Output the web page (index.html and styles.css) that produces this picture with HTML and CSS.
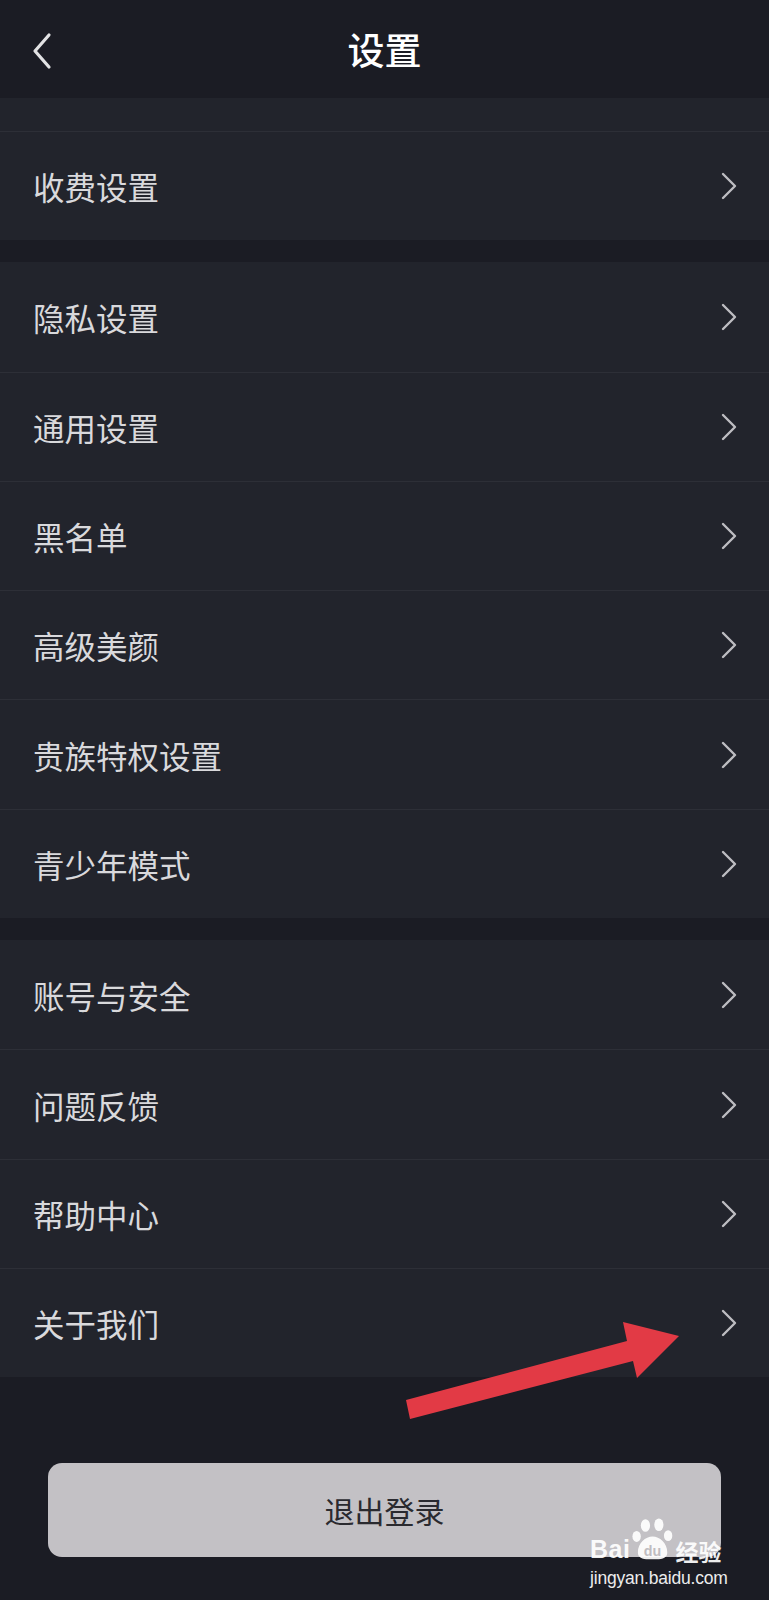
FILE: index.html
```html
<!DOCTYPE html>
<html lang="zh-CN">
<head>
<meta charset="utf-8">
<title>设置</title>
<link rel="stylesheet" href="styles.css">
</head>
<body>
<div class="page">
  <header class="topbar">
    <svg class="back" width="22" height="38" viewBox="0 0 22 38"><path d="M18 3 L4 19 L18 35" fill="none" stroke="#e2e2e4" stroke-width="3.2" stroke-linecap="round" stroke-linejoin="round"/></svg>
    <h1 class="title">设置</h1>
  </header>

  <section class="group">
    <div class="blank"></div>
    <div class="row bordered"><span>收费设置</span><svg class="chev" width="18" height="28" viewBox="0 0 18 28"><path d="M3 2 L15 14 L3 26" fill="none" stroke="#bdbdc1" stroke-width="2.4" stroke-linecap="round" stroke-linejoin="round"/></svg></div>
  </section>

  <section class="group">
    <div class="row"><span>隐私设置</span><svg class="chev" width="18" height="28" viewBox="0 0 18 28"><path d="M3 2 L15 14 L3 26" fill="none" stroke="#bdbdc1" stroke-width="2.4" stroke-linecap="round" stroke-linejoin="round"/></svg></div>
    <div class="row bordered"><span>通用设置</span><svg class="chev" width="18" height="28" viewBox="0 0 18 28"><path d="M3 2 L15 14 L3 26" fill="none" stroke="#bdbdc1" stroke-width="2.4" stroke-linecap="round" stroke-linejoin="round"/></svg></div>
    <div class="row bordered"><span>黑名单</span><svg class="chev" width="18" height="28" viewBox="0 0 18 28"><path d="M3 2 L15 14 L3 26" fill="none" stroke="#bdbdc1" stroke-width="2.4" stroke-linecap="round" stroke-linejoin="round"/></svg></div>
    <div class="row bordered"><span>高级美颜</span><svg class="chev" width="18" height="28" viewBox="0 0 18 28"><path d="M3 2 L15 14 L3 26" fill="none" stroke="#bdbdc1" stroke-width="2.4" stroke-linecap="round" stroke-linejoin="round"/></svg></div>
    <div class="row bordered"><span>贵族特权设置</span><svg class="chev" width="18" height="28" viewBox="0 0 18 28"><path d="M3 2 L15 14 L3 26" fill="none" stroke="#bdbdc1" stroke-width="2.4" stroke-linecap="round" stroke-linejoin="round"/></svg></div>
    <div class="row bordered"><span>青少年模式</span><svg class="chev" width="18" height="28" viewBox="0 0 18 28"><path d="M3 2 L15 14 L3 26" fill="none" stroke="#bdbdc1" stroke-width="2.4" stroke-linecap="round" stroke-linejoin="round"/></svg></div>
  </section>

  <section class="group">
    <div class="row"><span>账号与安全</span><svg class="chev" width="18" height="28" viewBox="0 0 18 28"><path d="M3 2 L15 14 L3 26" fill="none" stroke="#bdbdc1" stroke-width="2.4" stroke-linecap="round" stroke-linejoin="round"/></svg></div>
    <div class="row bordered"><span>问题反馈</span><svg class="chev" width="18" height="28" viewBox="0 0 18 28"><path d="M3 2 L15 14 L3 26" fill="none" stroke="#bdbdc1" stroke-width="2.4" stroke-linecap="round" stroke-linejoin="round"/></svg></div>
    <div class="row bordered"><span>帮助中心</span><svg class="chev" width="18" height="28" viewBox="0 0 18 28"><path d="M3 2 L15 14 L3 26" fill="none" stroke="#bdbdc1" stroke-width="2.4" stroke-linecap="round" stroke-linejoin="round"/></svg></div>
    <div class="row bordered"><span>关于我们</span><svg class="chev" width="18" height="28" viewBox="0 0 18 28"><path d="M3 2 L15 14 L3 26" fill="none" stroke="#bdbdc1" stroke-width="2.4" stroke-linecap="round" stroke-linejoin="round"/></svg></div>
  </section>

  <div class="logout-wrap">
    <button class="logout">退出登录</button>
  </div>

  <svg class="arrow" width="290" height="110" viewBox="0 0 290 110"><polygon points="6,85 227,26 223,7 279,21 237,63 233,46 10,104" fill="#e23a45"/></svg>

  <div class="watermark">
    <div class="wm-logo">
      <span class="wm-bai">Bai</span>
      <svg class="paw" width="42" height="44" viewBox="0 0 50 50">
        <ellipse cx="16" cy="9" rx="5.5" ry="7.5" fill="#fff"/>
        <ellipse cx="32" cy="8" rx="5.5" ry="7.5" fill="#fff"/>
        <ellipse cx="5.5" cy="22" rx="5" ry="6.5" fill="#fff"/>
        <ellipse cx="43" cy="21" rx="5" ry="6.5" fill="#fff"/>
        <path d="M7 41 C7 30 16 22 24.5 22 C33 22 42 30 42 41 C42 48 35 50 24.5 49 C14 50 7 48 7 41 Z" fill="#fff"/>
        <text x="24.5" y="45" text-anchor="middle" font-family="Liberation Sans, sans-serif" font-weight="bold" font-size="17" fill="#bfbdc1">du</text>
      </svg>
      <span class="wm-jy">经验</span>
    </div>
    <div class="wm-url">jingyan.baidu.com</div>
  </div>
</div>
</body>
</html>
```

FILE: styles.css
```css
* { box-sizing: border-box; }
html, body {
  margin: 0;
  padding: 0;
  background: #1b1c24;
}
.page {
  position: relative;
  width: 769px;
  min-height: 1600px;
  background: #1b1c24;
  font-family: "Noto Sans CJK SC", "Noto Sans", sans-serif;
  overflow: hidden;
}
.topbar {
  height: 98px;
  display: flex;
  align-items: center;
  justify-content: center;
  position: relative;
  background: #1b1c24;
}
.back {
  position: absolute;
  left: 31px;
  top: 32px;
}
.title {
  margin: 0;
  font-size: 37px;
  font-weight: 500;
  color: #ffffff;
  line-height: 1;
}
.group {
  background: #22242c;
  margin-bottom: 22px;
}
.blank {
  height: 33px;
}
.row {
  height: 109.3px;
  display: flex;
  align-items: center;
  justify-content: space-between;
  padding: 0 31px 0 33px;
  font-size: 31.5px;
  color: #d9d9dc;
}
.row.bordered {
  border-top: 1px solid #2d2f37;
}
.chev {
  display: block;
}
.logout-wrap {
  padding: 64px 48px 0 48px;
}
.logout {
  display: block;
  width: 673px;
  height: 94px;
  border: none;
  border-radius: 14px;
  background: #c3c1c5;
  color: #2a2a2f;
  font-family: "Noto Sans CJK SC", "Noto Sans", sans-serif;
  font-size: 30px;
  padding: 0;
}
.arrow {
  position: absolute;
  left: 400px;
  top: 1315px;
}
.watermark {
  position: absolute;
  left: 590px;
  top: 1515px;
  color: #fff;
  opacity: 0.92;
}
.wm-logo {
  display: flex;
  align-items: flex-end;
  height: 46px;
}
.wm-bai {
  font-family: "Liberation Sans", sans-serif;
  font-weight: bold;
  font-size: 25px;
  line-height: 1;
  color: #fff;
  letter-spacing: 0.5px;
  margin-bottom: -1px;
}
.paw {
  display: block;
  margin-left: 2px;
}
.wm-jy {
  font-size: 23px;
  font-weight: bold;
  line-height: 1;
  color: #fff;
  margin-left: 1px;
  margin-bottom: -2px;
}
.wm-url {
  font-family: "Liberation Sans", sans-serif;
  font-size: 17.5px;
  color: #fff;
  margin-top: 7px;
  letter-spacing: -0.2px;
}
```
